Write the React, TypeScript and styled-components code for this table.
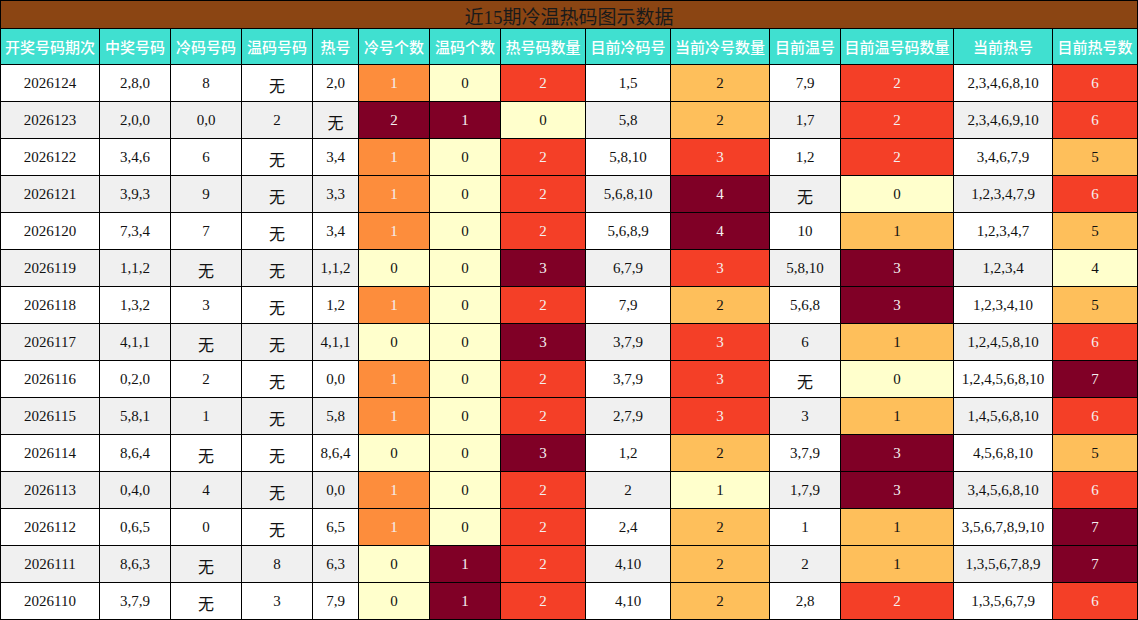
import React from "react";
import styled, { createGlobalStyle } from "styled-components";

const GlobalStyle = createGlobalStyle`
  html, body { margin: 0; padding: 0; background: #fff; }
  body { font-family: "Liberation Serif", "Noto Sans CJK SC", serif; }
`;

const COLS = [98, 70, 70, 70, 45, 70, 70, 84, 84, 98, 70, 112, 98, 84];

const Grid = styled.div`
  display: grid;
  grid-template-columns: ${COLS.map((c) => `${c}px`).join(" ")};
  grid-template-rows: 27px 35px repeat(15, 36px);
  gap: 1px;
  padding: 1px;
  background: #000;
  width: 1138px;
  box-sizing: border-box;
`;

const Title = styled.div`
  grid-column: 1 / -1;
  background: #8b4513;
  color: #1a1a1a;
  font-size: 19px;
  display: flex;
  align-items: center;
  justify-content: center;
  padding-top: 2px;
  box-sizing: border-box;
`;

const Head = styled.div`
  background: #40e0d0;
  color: #fff;
  font-family: "Noto Sans CJK SC", sans-serif;
  font-size: 15px;
  font-weight: 500;
  display: flex;
  align-items: center;
  justify-content: center;
  white-space: nowrap;
`;

const Cell = styled.div<{ $bg: string; $light?: boolean }>`
  background: ${(p) => p.$bg};
  color: ${(p) => (p.$light ? "#f4f0f0" : "#111")};
  font-size: 15px;
  display: flex;
  align-items: center;
  justify-content: center;
  white-space: nowrap;
`;

const None = styled.span`
  font-family: "Noto Sans CJK SC", sans-serif;
  font-size: 16px;
  position: relative;
  top: 2px;
`;

const headers = [
  "开奖号码期次", "中奖号码", "冷码号码", "温码号码", "热号", "冷号个数", "温码个数",
  "热号码数量", "目前冷码号", "当前冷号数量", "目前温号", "目前温号码数量", "当前热号", "目前热号数",
];

const rows: string[][] = [
  ["2026124", "2,8,0", "8", "无", "2,0", "1", "0", "2", "1,5", "2", "7,9", "2", "2,3,4,6,8,10", "6"],
  ["2026123", "2,0,0", "0,0", "2", "无", "2", "1", "0", "5,8", "2", "1,7", "2", "2,3,4,6,9,10", "6"],
  ["2026122", "3,4,6", "6", "无", "3,4", "1", "0", "2", "5,8,10", "3", "1,2", "2", "3,4,6,7,9", "5"],
  ["2026121", "3,9,3", "9", "无", "3,3", "1", "0", "2", "5,6,8,10", "4", "无", "0", "1,2,3,4,7,9", "6"],
  ["2026120", "7,3,4", "7", "无", "3,4", "1", "0", "2", "5,6,8,9", "4", "10", "1", "1,2,3,4,7", "5"],
  ["2026119", "1,1,2", "无", "无", "1,1,2", "0", "0", "3", "6,7,9", "3", "5,8,10", "3", "1,2,3,4", "4"],
  ["2026118", "1,3,2", "3", "无", "1,2", "1", "0", "2", "7,9", "2", "5,6,8", "3", "1,2,3,4,10", "5"],
  ["2026117", "4,1,1", "无", "无", "4,1,1", "0", "0", "3", "3,7,9", "3", "6", "1", "1,2,4,5,8,10", "6"],
  ["2026116", "0,2,0", "2", "无", "0,0", "1", "0", "2", "3,7,9", "3", "无", "0", "1,2,4,5,6,8,10", "7"],
  ["2026115", "5,8,1", "1", "无", "5,8", "1", "0", "2", "2,7,9", "3", "3", "1", "1,4,5,6,8,10", "6"],
  ["2026114", "8,6,4", "无", "无", "8,6,4", "0", "0", "3", "1,2", "2", "3,7,9", "3", "4,5,6,8,10", "5"],
  ["2026113", "0,4,0", "4", "无", "0,0", "1", "0", "2", "2", "1", "1,7,9", "3", "3,4,5,6,8,10", "6"],
  ["2026112", "0,6,5", "0", "无", "6,5", "1", "0", "2", "2,4", "2", "1", "1", "3,5,6,7,8,9,10", "7"],
  ["2026111", "8,6,3", "无", "8", "6,3", "0", "1", "2", "4,10", "2", "2", "1", "1,3,5,6,7,8,9", "7"],
  ["2026110", "3,7,9", "无", "3", "7,9", "0", "1", "2", "4,10", "2", "2,8", "2", "1,3,5,6,7,9", "6"],
];

const scaleCols = [5, 6, 7, 9, 11, 13];

const range: Record<number, [number, number]> = {};
scaleCols.forEach((c) => {
  const vals = rows.map((r) => Number(r[c]));
  range[c] = [Math.min(...vals), Math.max(...vals)];
});

function heat(col: number, v: number): { bg: string; light: boolean } {
  const [mn, mx] = range[col];
  const t = mx === mn ? 0 : (v - mn) / (mx - mn);
  if (t <= 0.01) return { bg: "#ffffcc", light: false };
  if (t < 0.4) return { bg: "#febf5b", light: false };
  if (t < 0.6) return { bg: "#fd8d3c", light: true };
  if (t < 0.99) return { bg: "#f43f27", light: true };
  return { bg: "#800026", light: true };
}

export default function App() {
  return (
    <>
      <GlobalStyle />
      <Grid>
        <Title>近15期冷温热码图示数据</Title>
        {headers.map((h) => (
          <Head key={h}>{h}</Head>
        ))}
        {rows.map((r, ri) =>
          r.map((v, ci) => {
            const base = ri % 2 === 1 ? "#f0f0f0" : "#ffffff";
            if (scaleCols.includes(ci)) {
              const h = heat(ci, Number(v));
              return (
                <Cell key={`${ri}-${ci}`} $bg={h.bg} $light={h.light}>
                  {v}
                </Cell>
              );
            }
            return (
              <Cell key={`${ri}-${ci}`} $bg={base}>
                {v === "无" ? <None>{v}</None> : v}
              </Cell>
            );
          })
        )}
      </Grid>
    </>
  );
}
